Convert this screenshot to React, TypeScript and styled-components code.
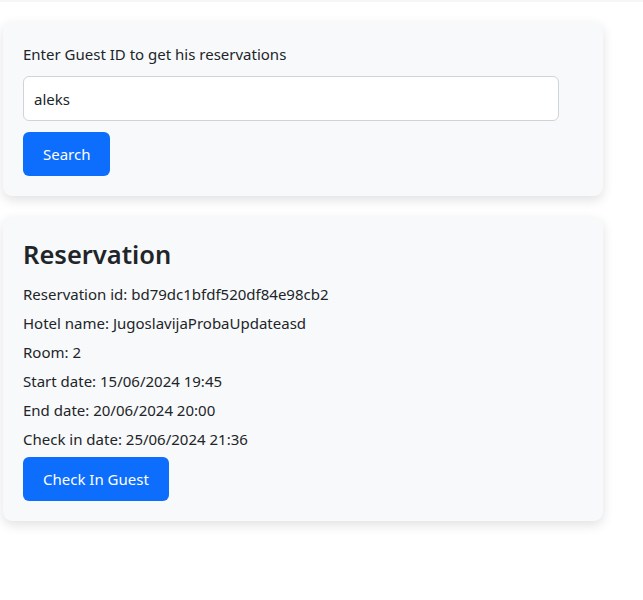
import React from "react";
import styled, { createGlobalStyle } from "styled-components";

const Global = createGlobalStyle`
  html, body { margin: 0; padding: 0; background: #fff; }
  body {
    font-family: "Noto Sans", "Open Sans", Arial, sans-serif;
    font-size: 15px;
    color: #212529;
  }
  * { box-sizing: border-box; }
`;

const TopStrip = styled.div`
  height: 2px;
  background: #f6f6f6;
`;

const Page = styled.main`
  padding: 20px 0 30px 3px;
  display: flex;
  flex-direction: column;
  gap: 21px;
  width: 603px;
`;

const Card = styled.section`
  background: #f8f9fa;
  border-radius: 9px;
  box-shadow: 0 4px 12px rgba(0, 0, 0, 0.12);
  padding: 20px;
  display: flex;
  flex-direction: column;
  align-items: flex-start;
`;

const Label = styled.label`
  line-height: 24px;
  margin-bottom: 10px;
`;

const Input = styled.input`
  width: 536px;
  height: 45px;
  border: 1px solid #ced4da;
  border-radius: 6px;
  background: #fff;
  padding: 0 10px;
  font: inherit;
  font-size: 15px;
  color: #212529;
  margin-bottom: 11px;
  outline: none;
`;

const Button = styled.button`
  background: #0d6efd;
  color: #fff;
  border: none;
  border-radius: 6px;
  height: 44px;
  padding: 0 20px;
  font: inherit;
  font-size: 15px;
  cursor: pointer;
`;

const Title = styled.h2`
  margin: 0 0 12px;
  font-size: 25.5px;
  font-weight: 600;
  line-height: 34px;
`;

const Field = styled.p`
  margin: 0 0 6px;
  line-height: 23px;
`;

const reservation = [
  "Reservation id: bd79dc1bfdf520df84e98cb2",
  "Hotel name: JugoslavijaProbaUpdateasd",
  "Room: 2",
  "Start date: 15/06/2024 19:45",
  "End date: 20/06/2024 20:00",
  "Check in date: 25/06/2024 21:36",
];

export default function App() {
  return (
    <>
      <Global />
      <TopStrip />
      <Page>
        <Card>
          <Label htmlFor="guest">Enter Guest ID to get his reservations</Label>
          <Input id="guest" defaultValue="aleks" />
          <Button>Search</Button>
        </Card>
        <Card>
          <Title>Reservation</Title>
          {reservation.map((r) => (
            <Field key={r}>{r}</Field>
          ))}
          <Button>Check In Guest</Button>
        </Card>
      </Page>
    </>
  );
}
